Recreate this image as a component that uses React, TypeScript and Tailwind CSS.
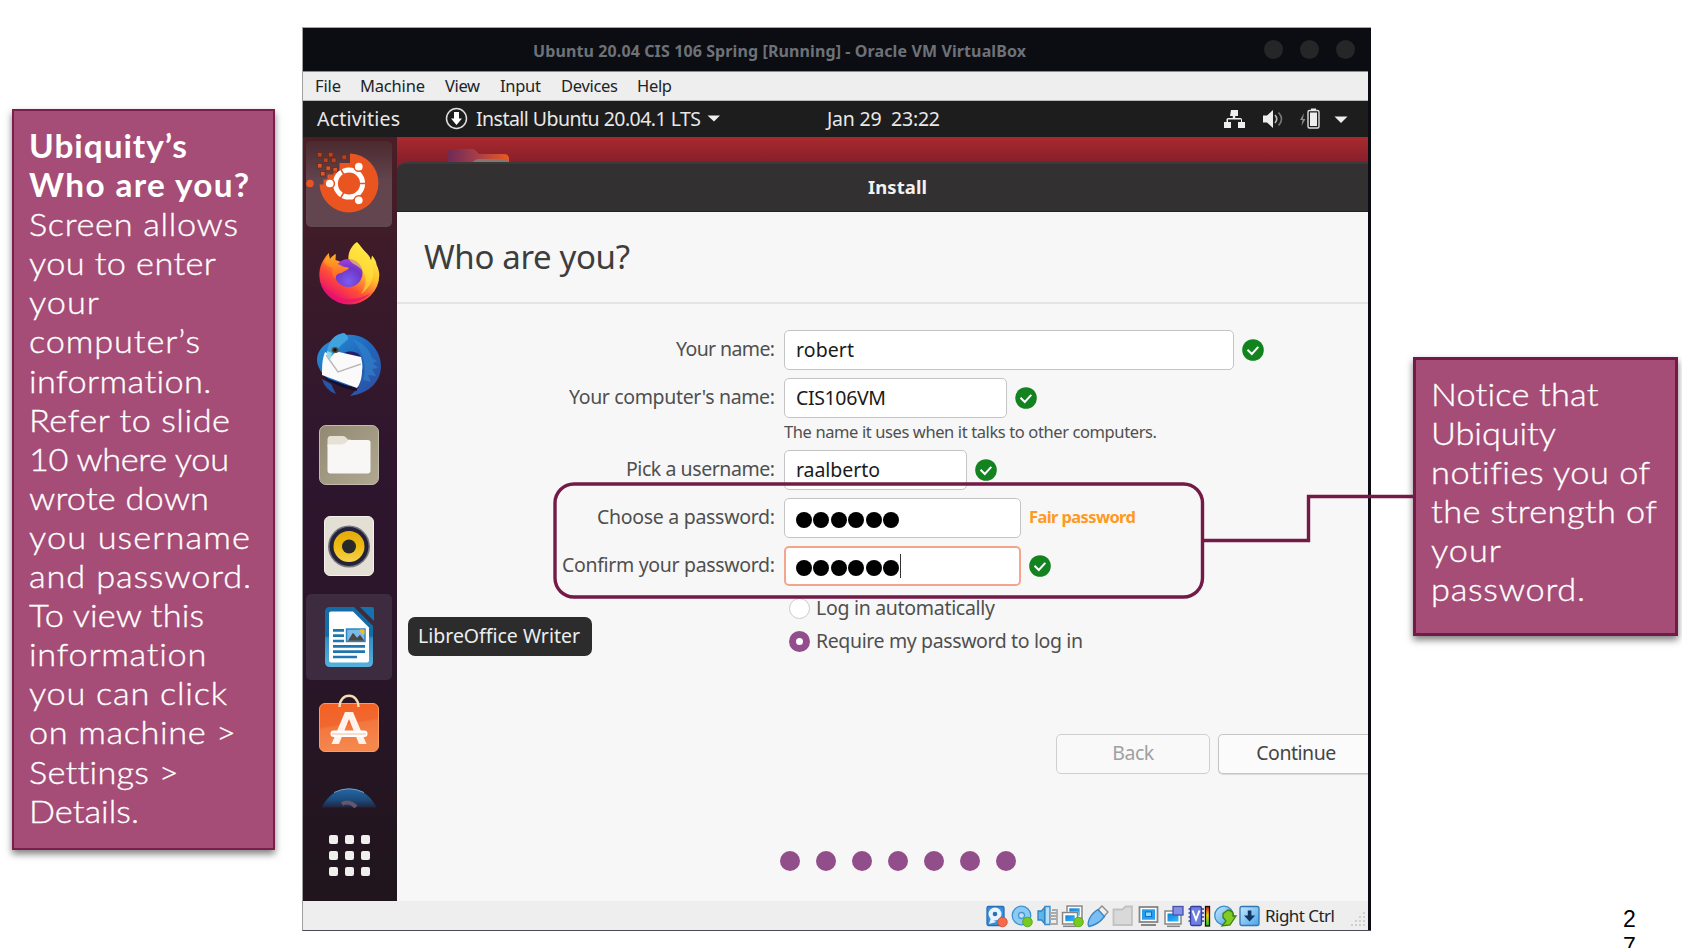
import React, { useLayoutEffect, useRef, useState } from "react";

const noto = "font-['Noto_Sans',sans-serif]";
const lato = "font-['Lato',sans-serif]";

/* Single line of text tracked out (or in) so that it spans exactly `w` pixels.
   `stretch` widens the letter shapes before the remaining gap is shared out. */
function Line({ t, w, className = "", stretch = 1 }: { t: string; w: number; className?: string; stretch?: number }) {
  const ref = useRef<HTMLSpanElement>(null);
  const [gap, setGap] = useState(0);
  useLayoutEffect(() => {
    const el = ref.current;
    if (!el) return;
    const before = el.style.letterSpacing;
    el.style.letterSpacing = "0px";
    const natural = el.getBoundingClientRect().width / stretch;
    el.style.letterSpacing = before;
    setGap((w / stretch - natural) / Math.max(1, t.length - 1));
  }, [t, w, stretch]);
  return (
    <span className={`block shrink-0 whitespace-pre ${className}`} style={{ width: w }}>
      <span
        ref={ref}
        className={stretch === 1 ? "" : "inline-block origin-left"}
        style={{ letterSpacing: gap, transform: stretch === 1 ? undefined : `scaleX(${stretch})` }}
      >
        {t}
      </span>
    </span>
  );
}

const leftNote: [string, number][] = [
  ["Screen allows", 209], ["you to enter", 187], ["your", 70], ["computer’s", 171],
  ["information.", 183], ["Refer to slide", 201], ["10 where you", 200], ["wrote down", 180],
  ["you username", 221], ["and password.", 222], ["To view this", 175], ["information", 178],
  ["you can click", 198], ["on machine >", 207], ["Settings >", 149], ["Details.", 110],
];

const rightNote: [string, number][] = [
  ["Notice that", 168], ["Ubiquity", 125], ["notifies you of", 219],
  ["the strength of", 226], ["your", 70], ["password.", 154],
];

function LeftNote() {
  return (
    <aside className={`${lato} ml-[12px] mt-[109px] h-[741px] w-[263px] shrink-0 border-2 border-[#7a1e4c] bg-[#a54d76] pl-[15px] pt-[16px] text-[31.5px] leading-[39.1px] text-white shadow-[0_4px_7px_rgba(0,0,0,0.5)]`}>
      <Line t="Ubiquity’s" w={158} stretch={1.06} className="h-[39.1px] font-bold" />
      <Line t="Who are you?" w={220} stretch={1.06} className="h-[39.1px] font-bold" />
      {leftNote.map(([t, w], i) => (
        <Line key={i} t={t} w={w} stretch={1.09} className="h-[39.1px] font-light [-webkit-text-stroke:0.35px_white]" />
      ))}
    </aside>
  );
}

function RightNote() {
  return (
    <aside className={`${lato} ml-[41.500px] mt-[357px] h-[279px] w-[265px] shrink-0 border-[3.5px] border-[#741a48] bg-[#a54d76] pl-[15px] pt-[15px] text-[31.5px] font-light leading-[39.1px] text-white shadow-[0_4px_7px_rgba(0,0,0,0.5)]`}>
      {rightNote.map(([t, w], i) => (
        <Line key={i} t={t} w={w} stretch={1.09} className="h-[39.1px] [-webkit-text-stroke:0.35px_white]" />
      ))}
    </aside>
  );
}

function TitleBar() {
  return (
    <div className="flex h-[43px] items-center bg-[#0b0d13] pl-[230px]">
      <Line t="Ubuntu 20.04 CIS 106 Spring [Running] - Oracle VM VirtualBox" w={493} className="pt-[2px] text-[16px] font-bold leading-[22px] text-[#6d7278]" />
      <div className="ml-[238px] flex gap-[17px]">
        <i className="size-[19px] rounded-full bg-[#252628]" />
        <i className="size-[19px] rounded-full bg-[#252628]" />
        <i className="size-[19px] rounded-full bg-[#252628]" />
      </div>
    </div>
  );
}

function MenuBar() {
  return (
    <div className="flex h-[30px] items-center border-b border-t border-b-[#b5b9b9] border-t-[#8a8c8e] bg-[#eee] pb-[1px] pl-[12px] text-[16.5px] leading-[22px] text-[#202428]">
      <Line t="File" w={26} className="mr-[19px]" />
      <Line t="Machine" w={65} className="mr-[20px]" />
      <Line t="View" w={35} className="mr-[20px]" />
      <Line t="Input" w={41} className="mr-[20px]" />
      <Line t="Devices" w={57} className="mr-[19px]" />
      <Line t="Help" w={35} />
    </div>
  );
}

function TopPanel() {
  return (
    <div className="flex h-[36px] items-center bg-[#1d1d1d] pb-[1px] pl-[14px] text-[19.5px] leading-[26px] text-[#e8e8e8]">
      <Line t="Activities" w={83} className="mr-[45px]" />
      <svg width="23" height="23" viewBox="0 0 23 23" className="mr-[8px] shrink-0">
        <circle cx="11.5" cy="11.5" r="10" fill="none" stroke="#dedede" strokeWidth="1.5" />
        <path d="M9 5h5v6.5h3L11.500 18 6 11.500h3z" fill="#fff" />
      </svg>
      <Line t="Install Ubuntu 20.04.1 LTS" w={225} />
      <svg width="14" height="7" viewBox="0 0 14 7" className="ml-[6px] shrink-0">
        <path d="M0.500 0.500h12.500L7 6.500z" fill="#eee" />
      </svg>
      <Line t="Jan 29  23:22" w={113} className="ml-[106px]" />
      <svg width="124" height="24" viewBox="1224 106 124 24" className="ml-[284px] shrink-0" fill="#eee">
        <path d="M1231 109h7v6h-2.800v2h5.300a1.500 1.500 0 0 1 1.500 1.500v2.500h3v6h-7v-6h3v-2.500h-13v2.500h3v6h-7v-6h2.500v-2.500a1.500 1.500 0 0 1 1.500-1.500h4.800v-2h-2.800z" />
        <path d="M1263 114.500h4l6-5.500v18l-6-5.500h-4z" />
        <path d="M1275 114q3.500 4 0 8" fill="none" stroke="#bbb" strokeWidth="1.600" />
        <path d="M1278.500 111.500q6 6.500 0 13" fill="none" stroke="#777" strokeWidth="1.600" />
        <path d="M1304 112l-4 7h2.500l-1 6 4-7h-2.500z" fill="#888" />
        <rect x="1308" y="109.500" width="11" height="17.500" rx="1.500" fill="none" stroke="#ddd" strokeWidth="1.400" />
        <rect x="1311" y="107.500" width="5" height="2" />
        <rect x="1310" y="111.500" width="7" height="13.500" />
        <path d="M1334.500 115.500h13l-6.500 6.500z" />
      </svg>
    </div>
  );
}

function UbuntuIcon() {
  const bits = [[317, 152], [328, 152], [323, 157.5], [331, 157.5], [341.500, 154.500], [317, 163], [325.500, 165.500], [332.500, 167], [320, 171]];
  return (
    <svg width="86" height="86" viewBox="306 141 86 86" className="rounded-[5px] bg-[linear-gradient(#4a2a2e,#62444e_45%,#62464f)]">
      <path d="M350 153.500a29.500 29.500 0 1 1-30.500 31h4v-5h4v-5h6v-3h6v-8.500h10.500z" fill="#e95420" />
      {bits.map(([x, y], i) => (
        <rect key={i} x={x + 0.500} y={y + 0.500} width="4.500" height="4.500" fill={i < 5 ? "#b6441f" : "#e05522"} stroke="#642718" strokeWidth="0.700" />
      ))}
      <circle cx="349" cy="183.500" r="13.600" fill="#e95420" stroke="#fff" strokeWidth="5" />
      <g stroke="#e95420" strokeWidth="1.700">
        <path d="M359 183.500h8M344 174.800l-4-7M344 192.200l-4 7" />
      </g>
      <g fill="#fff" stroke="#e95420" strokeWidth="1.500">
        <circle cx="329.800" cy="183.500" r="4.600" />
        <circle cx="358.800" cy="166.700" r="4.600" />
        <circle cx="358.800" cy="200.300" r="4.600" />
      </g>
      <circle cx="310" cy="183.500" r="3.800" fill="#e95420" />
    </svg>
  );
}

function FirefoxIcon() {
  return (
    <svg width="64" height="64" viewBox="317 241 64 64">
      <defs>
        <linearGradient id="ff" x1="0.850" y1="0.100" x2="0.250" y2="1">
          <stop offset="0" stopColor="#fff44f" />
          <stop offset="0.350" stopColor="#ffc02e" />
          <stop offset="0.650" stopColor="#ff4f35" />
          <stop offset="1" stopColor="#e5007e" />
        </linearGradient>
        <radialGradient id="fp" cx="0.500" cy="0.800" r="0.800">
          <stop offset="0" stopColor="#7a5cf0" />
          <stop offset="0.600" stopColor="#6f37c8" />
          <stop offset="1" stopColor="#a63be0" />
        </radialGradient>
        <linearGradient id="fl" x1="0" y1="0" x2="0" y2="1">
          <stop offset="0" stopColor="#ffad1f" />
          <stop offset="1" stopColor="#ff5f2e" />
        </linearGradient>
      </defs>
      <path d="M357 242c4 4 6 8 10 11.500 2 2 3.500 4.500 4 7l1-5c3 3 4.500 7 4.500 9 2 4 2.800 8 2.800 10.500a30 29.500 0 0 1-60 0c0-8 3.500-16 9.500-22l1 6c1.500-2 3.500-4 6-5l-.3 6q3 .5 6 2.500l7-1c-1-8 2-15 8.500-19.500z" fill="url(#ff)" />
      <circle cx="348.500" cy="273" r="14" fill="url(#fp)" />
      <path d="M324 262c1-2 3-5 5-6l1 5c1.500-2 3.500-3.500 5-4v6.500c4 0 5 2 8 3 2.500.8 5 .5 6 1.500-1 2-4 2.500-6 4-3 2-8 1-7 7-4-3-5-8-3-11-3-1-6-2-9-6z" fill="url(#fl)" />
      <path d="M357 243c4 6 11 10 14 18 6 12 1 26-10 33 6-9 6-18 1-24-5-6-13-6-13-13 0-6 4-10 8-14z" fill="#ffe63c" opacity="0.600" />
      <path d="M321 283a30 29.500 0 0 0 50 10q-10 6-23 6t-27-16z" fill="#e8136f" opacity="0.700" />
    </svg>
  );
}

function ThunderbirdIcon() {
  return (
    <svg width="68" height="68" viewBox="315 331 68 68">
      <defs>
        <linearGradient id="tb" x1="0" y1="0" x2="1" y2="1">
          <stop offset="0" stopColor="#2a96d8" />
          <stop offset="0.500" stopColor="#2068bd" />
          <stop offset="1" stopColor="#314b9d" />
        </linearGradient>
      </defs>
      <path d="M331 342c4-5 9-7 13-8l2 2c18-3 35 13 35 31 0 14-10 27-31 30l9-9-20-2c-14-6-22-16-22-25 0-7 4-14 14-19z" fill="url(#tb)" />
      <path d="M331 385l-9-5q3 11 14 15l-5-10z" fill="#2557a8" />
      <path d="M344 354c4-3 16-2 17 5l-2 3-22-6z" fill="#251d68" />
      <path d="M325 353c4 3 10 1 14 0l22 5c1 5 2 9 1 14 0 7-2 13-5 17l-35-13c0-8 0-15 3-23z" fill="#fafafa" />
      <path d="M326 356l12 17 23-8" fill="none" stroke="#b9b9b9" strokeWidth="1.400" />
      <path d="M323 378l34 12v2q-19-3-34-14z" fill="#101035" />
      <path d="M327 353c1-11 8-18 17-19 4 3 6 5 2 8-5 4-7 6-10 11-3 3-6 5-7 7z" fill="#3fa3df" />
      <ellipse cx="335" cy="351" rx="3.500" ry="3" fill="#5a4c3a" />
      <circle cx="335" cy="351" r="1.800" fill="#111" />
      <path d="M327 352l5 2-2 7q-4-4-3-9z" fill="#8fd8e4" />
      <path d="M352 340c10 3 18 10 20 19l5 3-4 2 5 5-6 1 4 7-8-1 3 7-8-2c5-14-1-30-11-41z" fill="#3489d2" opacity="0.550" />
    </svg>
  );
}

function FilesIcon() {
  return (
    <svg width="60" height="60" viewBox="0 0 60 60">
      <defs>
        <linearGradient id="fi" x1="0" y1="0" x2="1" y2="1">
          <stop offset="0" stopColor="#938973" />
          <stop offset="1" stopColor="#b0a890" />
        </linearGradient>
      </defs>
      <rect x="0.500" y="0.500" width="59" height="59" rx="6.500" fill="url(#fi)" stroke="#c2bba8" />
      <path d="M8.500 15q0-4 3-4h12.500q2 0 3 1.500l3 3-4 6H8.500z" fill="#e6e1d4" />
      <path d="M8.500 19.500h12.500q5 0 7-3t4-1.500h17q2.500 0 2.500 2.500v28q0 3-3 3h-37q-3 0-3-3z" fill="#f8f7f5" />
    </svg>
  );
}

function RhythmboxIcon() {
  return (
    <svg width="50" height="60" viewBox="0 0 50 60">
      <defs>
        <linearGradient id="rb" x1="0" y1="0" x2="0" y2="1">
          <stop offset="0" stopColor="#e5a90c" />
          <stop offset="0.500" stopColor="#eebb12" />
          <stop offset="1" stopColor="#f5d24c" />
        </linearGradient>
      </defs>
      <rect x="0.500" y="0.500" width="49" height="59" rx="5.500" fill="#e3dfd4" stroke="#f4f1ea" />
      <circle cx="25" cy="30.500" r="21" fill="#777584" />
      <circle cx="25" cy="30.500" r="19.500" fill="#232236" />
      <circle cx="25" cy="30.500" r="15.500" fill="url(#rb)" />
      <circle cx="25" cy="30.500" r="7" fill="#292929" />
    </svg>
  );
}

function WriterIcon() {
  return (
    <svg width="86" height="86" viewBox="306 594 86 86" className="rounded-[5px] bg-[#3d2c3f]">
      <defs>
        <linearGradient id="wr" x1="0" y1="0" x2="0" y2="1">
          <stop offset="0.480" stopColor="#146da6" />
          <stop offset="0.520" stopColor="#338fc6" />
          <stop offset="1" stopColor="#55b2dd" />
        </linearGradient>
      </defs>
      <path d="M330 607h24l19 19v36q0 5-5 5h-38q-5 0-5-5v-50q0-5 5-5z" fill="url(#wr)" />
      <path d="M331 611.500h22l16 16v33q0 2-2 2h-36q-2 0-2-2v-47q0-2 2-2z" fill="#fff" />
      <path d="M360 607h12q2 0 2 2v12z" fill="#1771ac" />
      <g stroke="#2077b0" strokeWidth="2.700">
        <path d="M333 630.300h11M333 635.600h11M333 641h11M333 646.300h32M333 651.600h32M333 657h24" />
      </g>
      <rect x="346.500" y="629" width="18.500" height="12.500" fill="#7cb9e8" stroke="#2784bd" strokeWidth="1.400" />
      <path d="M348 640.800l5-8 4 5 3-3 4.500 6z" fill="#4a4745" />
      <path d="M359.500 629.500h5v5q-4 0-5-5z" fill="#efbd28" />
    </svg>
  );
}

function SoftwareIcon() {
  return (
    <svg width="62" height="60" viewBox="0 0 62 60">
      <defs>
        <linearGradient id="sw" x1="0" y1="0" x2="0.200" y2="1">
          <stop offset="0" stopColor="#f55f22" />
          <stop offset="0.480" stopColor="#f0682f" />
          <stop offset="0.520" stopColor="#f2773f" />
          <stop offset="1" stopColor="#f5884e" />
        </linearGradient>
      </defs>
      <rect x="1.500" y="9.500" width="59" height="48" rx="5.500" fill="url(#sw)" stroke="#ff9b5c" />
      <path d="M21.500 13c0-15 19-15 19 0" fill="none" stroke="#f5ddb0" strokeWidth="2.400" />
      <path d="M27 18h8l13.500 32h-7.500L31 25 21 50h-7.500z" fill="#fff3ec" />
      <rect x="12.500" y="36.500" width="37" height="6.500" rx="3.200" fill="#fff" />
      <path d="M14 40h34" stroke="#f4b9a0" strokeWidth="1.200" />
    </svg>
  );
}

function HelpIcon() {
  return (
    <svg width="60" height="20" viewBox="0 0 60 20">
      <defs>
        <linearGradient id="he" x1="0" y1="0" x2="0" y2="1">
          <stop offset="0" stopColor="#2368a6" />
          <stop offset="0.600" stopColor="#1d4b7c" />
          <stop offset="1" stopColor="#22243c" />
        </linearGradient>
      </defs>
      <path d="M2.500 19.500Q12 1 30 .700T57.500 19.500z" fill="url(#he)" />
      <path d="M15 4.500Q30-3 45 4.500" fill="none" stroke="#7da9cf" strokeWidth="0.900" />
      <path d="M23 16q7-4 14 3" fill="none" stroke="#66566a" strokeWidth="4" />
    </svg>
  );
}

function Launcher() {
  return (
    <nav className="flex h-[764px] w-[94px] shrink-0 flex-col items-center bg-[linear-gradient(#4a1e26,#3a1a2a_20%,#2e162e_42%,#2a1529_68%,#20151c)] pr-[2px] pt-[4px]">
      <UbuntuIcon />
      <div className="mt-[14px]"><FirefoxIcon /></div>
      <div className="mt-[25px]"><ThunderbirdIcon /></div>
      <div className="mt-[27px]"><FilesIcon /></div>
      <div className="mt-[31px]"><RhythmboxIcon /></div>
      <div className="mt-[18px]"><WriterIcon /></div>
      <div className="mt-[14px]"><SoftwareIcon /></div>
      <div className="mt-[34px]"><HelpIcon /></div>
      <div className="mt-[27px] grid grid-cols-3 gap-[7px]">
        {Array.from({ length: 9 }, (_, i) => (
          <i key={i} className="size-[9px] rounded-[2px] bg-[#efefed]" />
        ))}
      </div>
    </nav>
  );
}

function Check() {
  return (
    <svg width="22" height="22" viewBox="0 0 22 22" className="ml-[8px] shrink-0">
      <circle cx="11" cy="11" r="10.800" fill="#12831f" />
      <path d="M5.500 10.800l4.300 4.200 6.500-7.200" fill="none" stroke="#fff" strokeWidth="2" />
    </svg>
  );
}

function Dots() {
  return (
    <span className="flex gap-[1.4px] pt-[3px]">
      {[0, 1, 2, 3, 4, 5].map((i) => (
        <i key={i} className="size-[16px] rounded-full bg-black" />
      ))}
    </span>
  );
}

const field = "flex shrink-0 items-center rounded-[5px] border border-[#c4c4c4] bg-white pl-[11px] text-[#1a1a1a]";

function Row({ label, w, children }: { label: string; w: number; children: React.ReactNode }) {
  return (
    <div className="flex h-[40px] items-center">
      <div className="flex w-[378px] shrink-0 justify-end pb-[2px]">
        <Line t={label} w={w} />
      </div>
      <div className="ml-[9px] flex items-center">{children}</div>
    </div>
  );
}

function Installer() {
  return (
    <section className="flex h-[739px] flex-col text-[19.5px] leading-[26px] text-[#4f4f4f]">
      <header className="flex h-[50px] shrink-0 items-center rounded-tl-[9px] border-b border-t-2 border-b-[#222] border-t-[#3b3a3a] bg-[#323030] pb-[2px] pl-[471px]">
        <Line t="Install" w={59} className="text-[18.5px] font-bold text-[#f2f2f2]" />
      </header>
      <div className="flex h-[92px] shrink-0 items-center border-b-2 border-[#e4e4e4] bg-[#f7f7f7] pl-[27px]">
        <Line t="Who are you?" w={206} className="text-[33px] leading-[40px] text-[#3d3d3d]" />
      </div>
      <div className="h-[597px] bg-[#f7f7f7] pt-[26px]">
        <div className="flex flex-col gap-[8px]">
          <Row label="Your name:" w={99}>
            <div className={`${field} h-[40px] w-[450px] pb-[1px]`}><Line t="robert" w={58} /></div>
            <Check />
          </Row>
          <div>
            <Row label="Your computer's name:" w={206}>
              <div className={`${field} h-[40px] w-[223px]`}><Line t="CIS106VM" w={90} /></div>
              <Check />
            </Row>
            <div className="flex h-[24px] items-center pl-[387px] pt-[3px]">
              <Line t="The name it uses when it talks to other computers." w={373} className="text-[16.5px]" />
            </div>
          </div>
          <Row label="Pick a username:" w={149}>
            <div className={`${field} h-[40px] w-[183px] pb-[1px]`}><Line t="raalberto" w={84} /></div>
            <Check />
          </Row>
          <Row label="Choose a password:" w={178}>
            <div className={`${field} h-[40px] w-[237px]`}><Dots /></div>
            <Line t="Fair password" w={107} className="ml-[8px] pb-[2px] text-[16.5px] font-bold text-[#ff9a1c]" />
          </Row>
          <Row label="Confirm your password:" w={213}>
            <div className="flex h-[40px] w-[237px] shrink-0 items-center rounded-[5px] border-2 border-[#f4a58d] bg-white pl-[10px]">
              <Dots />
              <i className="ml-[1px] h-[24px] w-px bg-[#333]" />
            </div>
            <Check />
          </Row>
        </div>
        <div className="mt-[6px] flex h-[33px] items-center pl-[392px]">
          <i className="mr-[6px] size-[21px] rounded-full border-[1.5px] border-[#cbcbcb] bg-white" />
          <Line t="Log in automatically" w={179} className="pb-[2px]" />
        </div>
        <div className="flex h-[33px] items-center pl-[392px]">
          <i className="mr-[6px] size-[21px] rounded-full border-[7px] border-[#924d8b] bg-white" />
          <Line t="Require my password to log in" w={267} className="pb-[2px]" />
        </div>
        <div className="mt-[76px] flex gap-[8px] pl-[659px]">
          <button className="flex h-[40px] w-[154px] shrink-0 items-center justify-center rounded-[5px] border border-[#cfcfcf] bg-[#f9f9f9] pb-[2px] text-[#a0a0a0]">
            <Line t="Back" w={42} />
          </button>
          <button className="flex h-[40px] w-[150px] shrink-0 items-center rounded-l-[5px] border border-r-0 border-[#c6c6c6] bg-[#fbfbfb] pb-[2px] pl-[37px] text-[#454545] shadow-[0_1px_1px_rgba(0,0,0,0.12)]">
            <Line t="Continue" w={80} />
          </button>
        </div>
        <div className="mt-[77px] flex gap-[16px] pl-[383px]">
          {[0, 1, 2, 3, 4, 5, 6].map((i) => (
            <i key={i} className="size-[20px] rounded-full bg-[#924d8b]" />
          ))}
        </div>
      </div>
    </section>
  );
}

function StatusIcons() {
  return (
    <svg width="276" height="24" viewBox="985 903 276 24" className="shrink-0" strokeWidth="1.300">
      <defs>
        <linearGradient id="bl" x1="0" y1="0" x2="1" y2="1">
          <stop offset="0" stopColor="#c5e7ff" />
          <stop offset="1" stopColor="#48a4ea" />
        </linearGradient>
        <linearGradient id="sc" x1="0" y1="0" x2="1" y2="1">
          <stop offset="0" stopColor="#0d75d6" />
          <stop offset="1" stopColor="#38c3ff" />
        </linearGradient>
        <linearGradient id="ht" x1="0" y1="0" x2="0" y2="1">
          <stop offset="0" stopColor="#e01010" />
          <stop offset="0.450" stopColor="#f4d210" />
          <stop offset="1" stopColor="#19cc19" />
        </linearGradient>
      </defs>
      <rect x="987" y="905.500" width="17" height="19" rx="1.500" fill="#3b8fde" stroke="#266db5" />
      <circle cx="995" cy="913" r="6.500" fill="#e8f4ff" />
      <circle cx="995" cy="913" r="2.300" fill="#2d6fb5" />
      <path d="M989 923l2-6 5 4z" fill="#e8f4ff" />
      <circle cx="1002.500" cy="921" r="4.800" fill="#f36b4b" stroke="#d44a30" strokeWidth="0.800" />
      <circle cx="1021.500" cy="914.500" r="9.300" fill="#8dcaf3" stroke="#3b93d3" />
      <circle cx="1021.500" cy="914.500" r="3" fill="#bce3fb" stroke="#4a97ce" />
      <circle cx="1027.500" cy="921" r="4.800" fill="#77ca20" stroke="#4e9c10" strokeWidth="0.800" />
      <path d="M1038 910h3.500l3-3.500v16l-3-3.500h-3.500z" fill="#5db7ef" stroke="#3282bd" />
      <path d="M1045 905.500h5v18h-5z" fill="#b8e0fa" stroke="#378bc9" />
      <path d="M1052 909h5v14h-7M1050 912h7M1050 915h7M1050 918h7" fill="none" stroke="#aaa" strokeWidth="1.800" />
      <rect x="1067.500" y="905.500" width="14" height="11" fill="url(#sc)" stroke="#fff" strokeWidth="3.600" />
      <rect x="1067" y="905" width="15" height="12.500" fill="none" stroke="#858585" strokeWidth="1.500" />
      <rect x="1063.500" y="912.500" width="13" height="9.500" fill="url(#sc)" stroke="#fff" strokeWidth="3.600" />
      <rect x="1062.500" y="911.500" width="15" height="11.500" fill="none" stroke="#858585" strokeWidth="1.500" />
      <path d="M1063 925.300h13" stroke="#858585" strokeWidth="1.500" />
      <circle cx="1078.500" cy="921" r="4.800" fill="#77ca20" stroke="#4e9c10" strokeWidth="0.800" />
      <path d="M1098 909l4-4 6 6-4.500 5z" fill="#eee" stroke="#8a8a8a" />
      <path d="M1098 908.500l6.500 7q-6 8-15.500 10-2-2 .5-8 3-6 8.500-9z" fill="#79bff3" stroke="#3484c6" />
      <path d="M1113.500 924v-15.500h9l3-3h6.500v18.500z" fill="#d9d9d9" stroke="#c2c2c2" strokeWidth="1.800" />
      <rect x="1139.500" y="906" width="18" height="15" fill="#fff" stroke="#858585" strokeWidth="1.800" />
      <rect x="1142" y="908.300" width="13" height="10.400" fill="#259df0" />
      <rect x="1145.500" y="911" width="6" height="4.500" fill="#8cdcff" stroke="#146dc0" strokeWidth="1" />
      <path d="M1141 924h15" stroke="#858585" strokeWidth="2" />
      <rect x="1166" y="911" width="14" height="11" fill="url(#sc)" stroke="#fff" strokeWidth="3" />
      <rect x="1165" y="910" width="16" height="13" fill="none" stroke="#858585" strokeWidth="1.500" />
      <path d="M1167 925.300h13" stroke="#858585" strokeWidth="1.500" />
      <rect x="1173" y="905.500" width="10" height="8.500" fill="#8491e2" stroke="#4451ad" />
      <rect x="1190.500" y="905.500" width="11" height="19" rx="1.500" fill="#6f7ee0" stroke="#333f9d" />
      <path d="M1188.500 908h2M1188.500 912h2M1188.500 916h2M1188.500 920h2M1202 908h2M1202 912h2M1202 916h2M1202 920h2" stroke="#333f9d" strokeWidth="1.600" />
      <path d="M1192.500 909.500l3.500 9 3.500-9" fill="none" stroke="#fff" strokeWidth="2" />
      <rect x="1205.500" y="905.500" width="4" height="19.500" fill="url(#ht)" stroke="#111" />
      <circle cx="1224" cy="914.500" r="9.300" fill="url(#bl)" stroke="#3a8ccb" />
      <path d="M1223 912.500l5-3.500q6 1 5 6h3l-6 9-8 1 4-5-3-3.500z" fill="#80cb24" stroke="#3e7f0e" />
      <rect x="1240" y="905.500" width="19" height="19" rx="2" fill="url(#bl)" stroke="#3376b5" />
      <path d="M1247.800 909.500h3.600v5h3.800l-5.600 6-5.600-6h3.800z" fill="#12355f" />
    </svg>
  );
}

function StatusBar() {
  return (
    <footer className="flex h-[29px] items-center bg-[#eee] pl-[682px]">
      <StatusIcons />
      <Line t="Right Ctrl" w={70} className="ml-[4px] text-[17px] leading-[22px] text-[#202428]" />
      <svg width="16" height="16" viewBox="0 0 16 16" className="ml-[16px] mt-[8px] shrink-0" fill="#cfcfcf">
        <path d="M12 0h2v2h-2zM8 4h2v2H8zM12 4h2v2h-2zM4 8h2v2H4zM8 8h2v2H8zM12 8h2v2h-2zM0 12h2v2H0zM4 12h2v2H4zM8 12h2v2H8zM12 12h2v2h-2z" />
      </svg>
    </footer>
  );
}

function VirtualMachine() {
  return (
    <main className={`${noto} ml-[27px] mt-[27px] flex h-[904px] w-[1069px] shrink-0 flex-col border border-r-0 border-b-[#4b4b52] border-l-[#a0a0a0] border-t-[#a5a5a5] bg-[#0b0d13]`}>
      <TitleBar />
      <div className="w-[1065px] overflow-hidden">
        <MenuBar />
        <TopPanel />
        <div className="flex">
          <Launcher />
          <div className="w-[971px] shrink-0 bg-[#8d1f2b]">
            <div className="flex h-[25px] items-end bg-[linear-gradient(#a92a2d,#871f2c)] pl-[50px]">
              <svg width="64" height="13" viewBox="0 0 64 13">
                <defs>
                  <linearGradient id="fo" x1="0" x2="1">
                    <stop offset="0" stopColor="#6e2b55" />
                    <stop offset="0.450" stopColor="#a33d4a" />
                    <stop offset="1" stopColor="#ea5a22" />
                  </linearGradient>
                </defs>
                <path d="M1 13V4q0-4 4-4h20q3 0 5 3l2 2h25q5 0 5 5v3z" fill="url(#fo)" />
                <path d="M26 13q2-3 6-3h29v3z" fill="#87766f" />
              </svg>
            </div>
            <Installer />
          </div>
        </div>
        <StatusBar />
      </div>
    </main>
  );
}

export default function App() {
  return (
    <div className="relative flex h-[948px] w-[1682px] items-start overflow-hidden bg-white">
      <LeftNote />
      <VirtualMachine />
      <RightNote />

      <div className={`${noto} absolute left-[408px] top-[617px] flex h-[39px] w-[184px] items-center rounded-[7px] bg-[#2c2c2c] pb-[2px] pl-[10px] text-[19.5px] leading-[26px] text-[#eee]`}>
        <Line t="LibreOffice Writer" w={162} />
      </div>

      <svg width="870" height="130" viewBox="550 475 870 130" fill="none" stroke="#741a48" strokeWidth="3.400" className="pointer-events-none absolute left-[550px] top-[475px]">
        <rect x="555" y="484" width="647.500" height="113" rx="19" />
        <path d="M1202 540.500h106.500v-44H1413" />
      </svg>

      <div className="absolute left-[1623px] top-[906px] w-[14px] font-['Liberation_Sans',sans-serif] text-[23px] leading-[27px] text-black">
        2<br />7
      </div>
    </div>
  );
}
